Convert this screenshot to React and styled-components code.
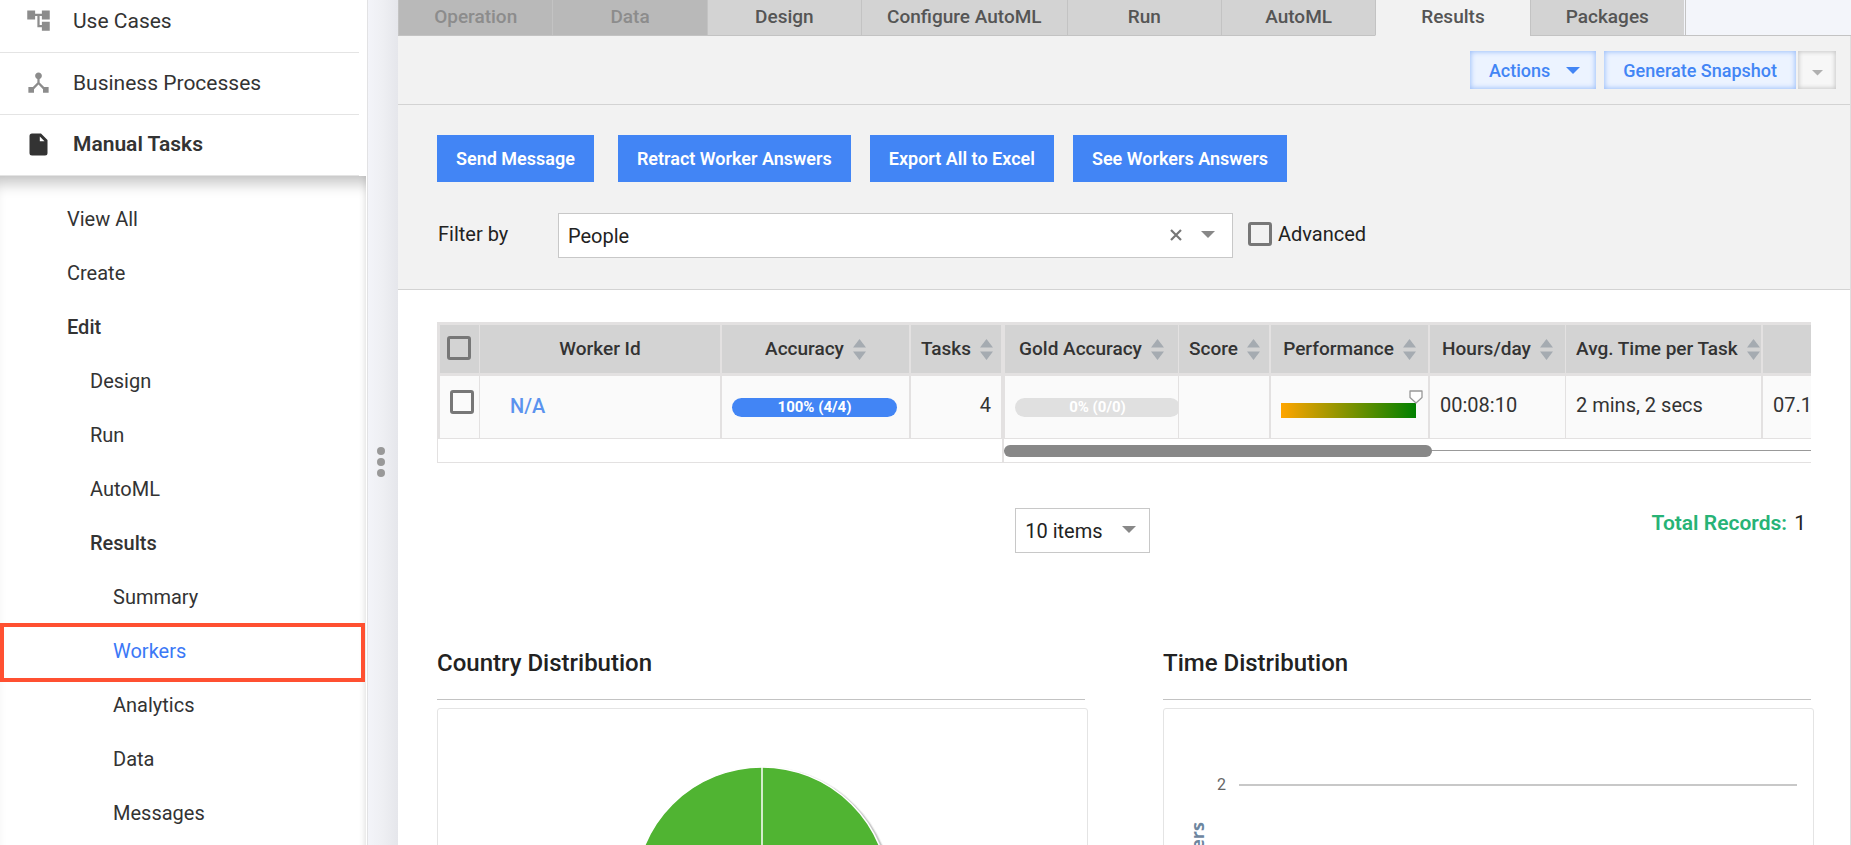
import React, { useState } from 'react';
import styled, { createGlobalStyle, css } from 'styled-components';
import { MdAccountTree, MdDeviceHub } from 'react-icons/md';


const subItems = [
    { label: 'View All', level: 0 },
    { label: 'Create', level: 0 },
    { label: 'Edit', level: 0, open: true },
    { label: 'Design', level: 1 },
    { label: 'Run', level: 1 },
    { label: 'AutoML', level: 1 },
    { label: 'Results', level: 1, open: true },
    { label: 'Summary', level: 2 },
    { label: 'Workers', level: 2, current: true },
    { label: 'Analytics', level: 2 },
    { label: 'Data', level: 2 },
    { label: 'Messages', level: 2 },
];

const tabs = [
    { label: 'Operation', disabled: true },
    { label: 'Data', disabled: true },
    { label: 'Design' },
    { label: 'Configure AutoML', wide: true },
    { label: 'Run' },
    { label: 'AutoML' },
    { label: 'Results' },
    { label: 'Packages' },
];

// widths include the right border of the column
const columns = [
    { label: 'Worker Id', width: 242, line: 2 },
    { label: 'Accuracy', width: 189, line: 2, sort: true },
    { label: 'Tasks', width: 94, line: 4, sort: true },
    { label: 'Gold Accuracy', width: 174, line: 1, sort: true },
    { label: 'Score', width: 92, line: 2, sort: true },
    { label: 'Performance', width: 159, line: 2, sort: true },
    { label: 'Hours/day', width: 136, line: 1, sort: true },
    { label: 'Avg. Time per Task', width: 197, line: 2, sort: true },
];


const FileIcon = () => (
    <svg width="27" height="27" viewBox="0 0 27 27" aria-hidden="true">
        <path fill="#333" fillRule="evenodd" d="M7 2.5h9l6.500 6.500v13a2.500 2.500 0 0 1-2.500 2.500H7a2.500 2.500 0 0 1-2.500-2.500V5A2.500 2.500 0 0 1 7 2.500zM14.800 5.500v4.700h4.700z" />
    </svg>
)

const Caret = ({ size = 14, color = '#888' }) => (
    <svg width={size} height={size / 2} viewBox="0 0 14 7" aria-hidden="true">
        <path fill={color} d="M0 0h14L7 7z" />
    </svg>
)

const SortIcon = () => (
    <SortSvg width="13" height="21" viewBox="0 0 13 21" aria-hidden="true">
        <path fill="#a5abb1" d="M6.500 0L13 8.500H0zM0 12.500h13L6.500 21z" />
    </SortSvg>
)


export default function App() {
    const [tab, setTab] = useState('Results');
    const [filter, setFilter] = useState('People');

    return (
        <Layout>
            <GlobalStyle />
            <Sidebar>
                <MainItem href="#use-cases"><MdAccountTree size={27} color="#8c8c8c" />Use Cases</MainItem>
                <MainItem href="#processes"><MdDeviceHub size={27} color="#8c8c8c" />Business Processes</MainItem>
                <MainItem href="#tasks" $open><FileIcon />Manual Tasks</MainItem>
                <SubMenu>
                    {subItems.map((item) => (
                        <SubItem key={item.label + item.level} href="#tasks" $level={item.level} $open={item.open} $current={item.current}>
                            {item.label}
                        </SubItem>
                    ))}
                </SubMenu>
            </Sidebar>

            <Splitter><Dot /><Dot /><Dot /></Splitter>

            <Main>
                <TabBar>
                    <TabList>
                        {tabs.map((t) => (
                            <Tab key={t.label} disabled={t.disabled} $wide={t.wide} $active={t.label === tab} onClick={() => setTab(t.label)}>
                                {t.label}
                            </Tab>
                        ))}
                    </TabList>
                </TabBar>

                <Page>
                    <Toolbar>
                        <GhostButton $menu>Actions<Caret color="#4285f5" /></GhostButton>
                        <ButtonGroup>
                            <GhostButton>Generate Snapshot</GhostButton>
                            <MoreButton aria-label="More snapshot options"><Caret size={11} color="#b0b0b0" /></MoreButton>
                        </ButtonGroup>
                    </Toolbar>

                    <Filters>
                        <Buttons>
                            <BlueButton $first>Send Message</BlueButton>
                            <BlueButton>Retract Worker Answers</BlueButton>
                            <BlueButton>Export All to Excel</BlueButton>
                            <BlueButton>See Workers Answers</BlueButton>
                        </Buttons>
                        <FilterRow>
                            <FilterLabel htmlFor="filter">Filter by</FilterLabel>
                            <FilterBox>
                                <Select id="filter" value={filter} onChange={(e) => setFilter(e.target.value)}>
                                    <option value="">&nbsp;</option>
                                    <option>People</option>
                                </Select>
                                <Clear aria-label="Clear filter" onClick={() => setFilter('')}>
                                    <svg width="12" height="12" viewBox="0 0 12 12"><path stroke="#777" strokeWidth="2.200" d="M1 1l10 10M11 1L1 11" /></svg>
                                </Clear>
                                <Arrow><Caret /></Arrow>
                            </FilterBox>
                            <CheckLabel><Checkbox type="checkbox" />Advanced</CheckLabel>
                        </FilterRow>
                    </Filters>

                    <Content>
                        <Grid>
                            <Table>
                                <colgroup>
                                    <col width="42" />
                                    {columns.map((c) => <col key={c.label} width={c.width} />)}
                                    <col width="141" />
                                </colgroup>
                                <thead>
                                    <tr>
                                        <CheckHead $line={1}><Checkbox type="checkbox" aria-label="Select all" /></CheckHead>
                                        {columns.map((c) => (
                                            <Th key={c.label} $line={c.line}>{c.label}{c.sort && <SortIcon />}</Th>
                                        ))}
                                        <Th $line={2} />
                                    </tr>
                                </thead>
                                <tbody>
                                    <tr>
                                        <CheckCell $line={1}><Checkbox type="checkbox" aria-label="Select N/A" /></CheckCell>
                                        <WorkerCell $line={2}><WorkerLink href="#worker">N/A</WorkerLink></WorkerCell>
                                        <Td $line={2}><Pill>100% (4/4)</Pill></Td>
                                        <Td $line={4} $right>4</Td>
                                        <Td $line={1}><Pill $empty>0% (0/0)</Pill></Td>
                                        <Td $line={2} />
                                        <Td $line={2}>
                                            <Performance>
                                                <Marker viewBox="0 0 14 14" aria-hidden="true">
                                                    <path fill="#fff" stroke="#999" strokeWidth="1.300" strokeLinejoin="round" d="M1 1h12v6.500L7 13 1 7.500z" />
                                                </Marker>
                                            </Performance>
                                        </Td>
                                        <Td $line={1}>00:08:10</Td>
                                        <Td $line={2}>2 mins, 2 secs</Td>
                                        <Td $line={2}>07.12.2021</Td>
                                    </tr>
                                </tbody>
                            </Table>
                            <ScrollStrip>
                                <Frozen />
                                <Track><Thumb /></Track>
                            </ScrollStrip>
                        </Grid>

                        <Pager>
                            <PageSize>
                                <Select aria-label="Items per page" defaultValue="10 items">
                                    <option>10 items</option>
                                    <option>20 items</option>
                                </Select>
                                <Arrow $small><Caret /></Arrow>
                            </PageSize>
                            <Total><b>Total Records:</b> 1</Total>
                        </Pager>

                        <Charts>
                            <section>
                                <Heading>Country Distribution</Heading>
                                <ChartBox>
                                    <Pie viewBox="0 0 280 280" aria-label="Country distribution">
                                        <circle cx="141" cy="142" r="127" fill="none" stroke="#000" strokeOpacity="0.060" strokeWidth="5" />
                                        <circle cx="141" cy="142" r="127" fill="none" stroke="#000" strokeOpacity="0.160" strokeWidth="3" />
                                        <circle cx="139" cy="140" r="127" fill="#50b432" stroke="#fff" strokeWidth="1.500" />
                                        <path d="M139 140V13" stroke="#fff" strokeWidth="1.500" />
                                    </Pie>
                                </ChartBox>
                            </section>
                            <section>
                                <Heading>Time Distribution</Heading>
                                <ChartBox>
                                    <AxisTitle>Number of Workers</AxisTitle>
                                    <Plot>
                                        <Tick>2</Tick>
                                        <GridLine />
                                    </Plot>
                                </ChartBox>
                            </section>
                        </Charts>
                    </Content>
                </Page>
            </Main>
        </Layout>
    )
}


const GlobalStyle = createGlobalStyle`
    *, *::after{
        box-sizing: border-box;
    }
    body{
        margin: 0;
        overflow: hidden;
        background: #fff;
        color: #222;
        font: 400 20px/24px Roboto, "Liberation Sans", sans-serif;
    }
    button, select, input{
        font: inherit;
        color: inherit;
        margin: 0;
    }
    button{
        border: 0;
        padding: 0;
        cursor: pointer;
    }
`

const Layout = styled.div`
    display: flex;
    height: 100vh;
    overflow: hidden;
`

/* sidebar */

const Sidebar = styled.nav`
    flex: 0 0 368px;
    margin-top: -9px;
    border-right: 1px solid #e2e2e4;
    padding-right: 1px;
`

const MainItem = styled.a`
    display: flex;
    align-items: center;
    gap: 21px;
    height: ${(p) => (p.$open ? 61 : 62)}px;
    margin-right: 7px;
    padding: 0 0 2px 25px;
    border-bottom: 1px solid #e4e4e4;
    color: #333;
    font-size: 21px;
    font-weight: ${(p) => (p.$open ? 600 : 400)};
    text-decoration: none;
`

const SubMenu = styled.div`
    padding-top: 16px;
    height: 100%;
    box-shadow: inset 0 16px 14px -8px rgba(0,0,0,0.22), inset -4px 0 6px -3px rgba(0,0,0,0.10);
`

const SubItem = styled.a`
    display: flex;
    align-items: center;
    position: relative;
    height: 54px;
    padding-left: ${(p) => 67 + p.$level * 23}px;
    color: ${(p) => (p.$current ? '#3b78f6' : '#333')};
    font-size: 20px;
    font-weight: ${(p) => (p.$open ? 500 : 400)};
    text-decoration: none;
    ${(p) => p.$current && css`
        &::after{
            content: "";
            position: absolute;
            top: -1px;
            left: 0;
            right: 1px;
            height: 59px;
            border: 4px solid #ff5031;
        }
    `}
`

const Splitter = styled.div`
    flex: 0 0 30px;
    display: flex;
    flex-direction: column;
    align-items: center;
    justify-content: center;
    gap: 3px;
    padding: 78px 4px 0 0;
    background: linear-gradient(to right, #f3f4f9, #eeeff3 50%, #e5e6eb);
`

const Dot = styled.span`
    width: 8px;
    height: 8px;
    border-radius: 50%;
    background: #999;
`

/* tabs */

const Main = styled.main`
    flex: 1;
    min-width: 0;
    display: flex;
    flex-direction: column;
`

const TabBar = styled.div`
    flex: none;
    background: #f3f5fa;
    padding-right: 1px;
    border-bottom: 1px solid #c3c3c3;
`

const TabList = styled.div`
    display: flex;
    width: 100%;
    max-width: 1288px;
    border-right: 1px solid #c3c3c3;
    padding-right: 1px;
    margin-bottom: -1px;
`

const Tab = styled.button`
    flex: ${(p) => (p.$wide ? 'none' : '1 1 0')};
    height: 36px;
    padding: 0 ${(p) => (p.$wide ? 25 : 10)}px 1px;
    border-left: 1px solid #c3c3c3;
    border-bottom: 1px solid ${(p) => (p.$active ? '#f2f2f2' : '#c3c3c3')};
    background: ${(p) => (p.$active ? '#f2f2f2' : '#d3d3d3')};
    color: #555;
    font-size: 19px;
    font-weight: 500;
    white-space: nowrap;
    &:disabled{
        background: #b9b9b9;
        color: #8c8c8c;
    }
`

const Page = styled.div`
    flex: 1;
    min-height: 0;
    border-right: 1px solid #dedede;
`

/* toolbars */

const Toolbar = styled.div`
    display: flex;
    justify-content: flex-end;
    gap: 8px;
    padding: 15px 14px;
    background: #f2f2f2;
    border-bottom: 1px solid #d3d3d3;
`

const ButtonGroup = styled.div`
    display: flex;
    gap: 2px;
`

const GhostButton = styled.button`
    display: flex;
    align-items: center;
    gap: 16px;
    height: 38px;
    padding: 1px ${(p) => (p.$menu ? 16 : 19)}px 0 19px;
    background: #ecf3ff;
    box-shadow: inset 0 0 5px 1px #9fc1fa;
    color: #4285f5;
    font-size: 18px;
    font-weight: 500;
    white-space: nowrap;
`

const MoreButton = styled.button`
    display: flex;
    align-items: center;
    justify-content: center;
    width: 38px;
    height: 38px;
    padding-top: 6px;
    background: #f7f7f7;
    box-shadow: inset 0 0 4px 1px #c8c8c8;
`

const Filters = styled.div`
    padding: 30px 39px 31px;
    background: #f2f2f2;
    border-bottom: 1px solid #d3d3d3;
`

const Buttons = styled.div`
    display: flex;
    gap: 19px;
    margin-bottom: 31px;
`

const BlueButton = styled.button`
    height: 47px;
    margin-right: ${(p) => (p.$first ? 5 : 0)}px;
    padding: 0 19px;
    background: #4285f5;
    color: #fff;
    font-size: 18px;
    font-weight: 600;
    white-space: nowrap;
`

const FilterRow = styled.div`
    display: flex;
    align-items: center;
    height: 45px;
`

const FilterLabel = styled.label`
    width: 121px;
    padding: 0 0 3px 1px;
`

const FilterBox = styled.div`
    position: relative;
    width: 675px;
`

const Select = styled.select`
    appearance: none;
    display: block;
    width: 100%;
    height: 45px;
    padding: 1px 9px 0;
    border: 1px solid #c8c8c8;
    border-radius: 0;
    background: #fff;
`

const Arrow = styled.span`
    position: absolute;
    right: ${(p) => (p.$small ? 14 : 18)}px;
    top: 18px;
    display: flex;
    pointer-events: none;
`

const Clear = styled.button`
    position: absolute;
    right: 51px;
    top: 16px;
    display: flex;
    background: none;
`

const CheckLabel = styled.label`
    display: flex;
    align-items: center;
    gap: 6px;
    margin-left: 15px;
    padding-bottom: 3px;
`

const Checkbox = styled.input`
    appearance: none;
    flex: none;
    display: block;
    width: 24px;
    height: 24px;
    border: 3px solid #777;
    border-radius: 3px;
    &:checked{
        background: #777;
    }
`

/* table */

const Content = styled.div`
    padding: 32px 39px 0;
`

const Grid = styled.div`
    overflow: hidden;
    border: 1px solid #e3e1e1;
    border-right: 0;
`

const Table = styled.table`
    table-layout: fixed;
    width: 1466px;
    border-collapse: separate;
    border-spacing: 0;
`

const cell = css`
    padding: 0 10px;
    border-right: ${(p) => p.$line}px solid #e3e1e1;
    overflow: hidden;
    white-space: nowrap;
`

const Th = styled.th`
    ${cell}
    height: 53px;
    padding-bottom: 1px;
    border-top: 2px solid #e3e1e1;
    border-bottom: 3px solid #e3e1e1;
    background: #d3d3d3;
    color: #333;
    font-size: 19px;
    font-weight: 500;
    text-align: center;
`

const SortSvg = styled.svg`
    margin-left: 9px;
    vertical-align: -5px;
`

const Td = styled.td`
    ${cell}
    height: 63px;
    padding-bottom: 4px;
    border-bottom: 1px solid #e3e1e1;
    background: #fafafa;
    color: #333;
    text-align: ${(p) => (p.$right ? 'right' : 'left')};
`

const CheckHead = styled(Th)`
    padding: 0 7px 3px;
    border-left: 2px solid #e3e1e1;
`

const CheckCell = styled(Td)`
    padding: 0 10px 10px;
    border-left: 2px solid #e3e1e1;
`

const WorkerCell = styled(Td)`
    padding-left: 30px;
    padding-bottom: 2px;
`

const WorkerLink = styled.a`
    color: #5b93ee;
    font-weight: 500;
    text-decoration: none;
`

const Pill = styled.div`
    width: 165px;
    height: 19px;
    margin-top: 4px;
    border-radius: 10px;
    background: ${(p) => (p.$empty ? '#e0e0e0' : '#4285f5')};
    color: #fff;
    font-size: 15px;
    font-weight: 700;
    line-height: 18px;
    text-align: center;
`

const Performance = styled.div`
    position: relative;
    width: 135px;
    height: 15px;
    margin-top: 11px;
    background: linear-gradient(to right, orange, green);
`

const Marker = styled.svg`
    position: absolute;
    right: -7px;
    top: -13px;
    width: 14px;
    height: 14px;
`

const ScrollStrip = styled.div`
    display: flex;
    height: 23px;
`

const Frozen = styled.div`
    flex: 0 0 566px;
    border-right: 2px solid #e3e1e1;
`

const Track = styled.div`
    flex: 1;
    display: flex;
    align-items: center;
    background: linear-gradient(#999, #999) 0 11px / 100% 1px no-repeat;
`

const Thumb = styled.div`
    width: 53%;
    height: 12px;
    border-radius: 6px;
    background: #888;
`

const Pager = styled.div`
    display: grid;
    grid-template-columns: 42% 135px 1fr;
    margin-top: 45px;
    padding-left: 2px;
`

const PageSize = styled.div`
    grid-column: 2;
    position: relative;
`

const Total = styled.div`
    padding: 3px 5px 0 0;
    font-size: 21px;
    text-align: right;
    b{
        margin-right: 2px;
        color: #27b376;
        font-weight: 600;
    }
`

/* charts */

const Charts = styled.div`
    display: grid;
    grid-template-columns: 1fr 1fr;
    gap: 75px;
    margin: 93px -3px 0 0;
`

const Heading = styled.h2`
    margin: 0 3px 8px 0;
    padding: 2px 0 20px;
    border-bottom: 1px solid #c3c3c3;
    color: #222;
    font-size: 24px;
    font-weight: 500;
    line-height: 31px;
`

const ChartBox = styled.div`
    display: flex;
    height: 420px;
    border: 1px solid #e4e4e4;
    border-radius: 3px;
`

const Pie = styled.svg`
    width: 280px;
    height: 280px;
    margin: 45px auto 0;
`

const AxisTitle = styled.div`
    align-self: flex-start;
    margin: 113px 0 0 23px;
    writing-mode: vertical-rl;
    transform: rotate(180deg);
    color: #6d869f;
    font: 700 18px/20px "Open Sans", sans-serif;
`

const Plot = styled.div`
    flex: 1;
    display: flex;
    align-items: center;
    align-self: flex-start;
    gap: 13px;
    margin: 66px 16px 0 10px;
`

const Tick = styled.span`
    color: #666;
    font-size: 16px;
    line-height: 20px;
`

const GridLine = styled.div`
    flex: 1;
    height: 2px;
    background: #c8c8c8;
`
